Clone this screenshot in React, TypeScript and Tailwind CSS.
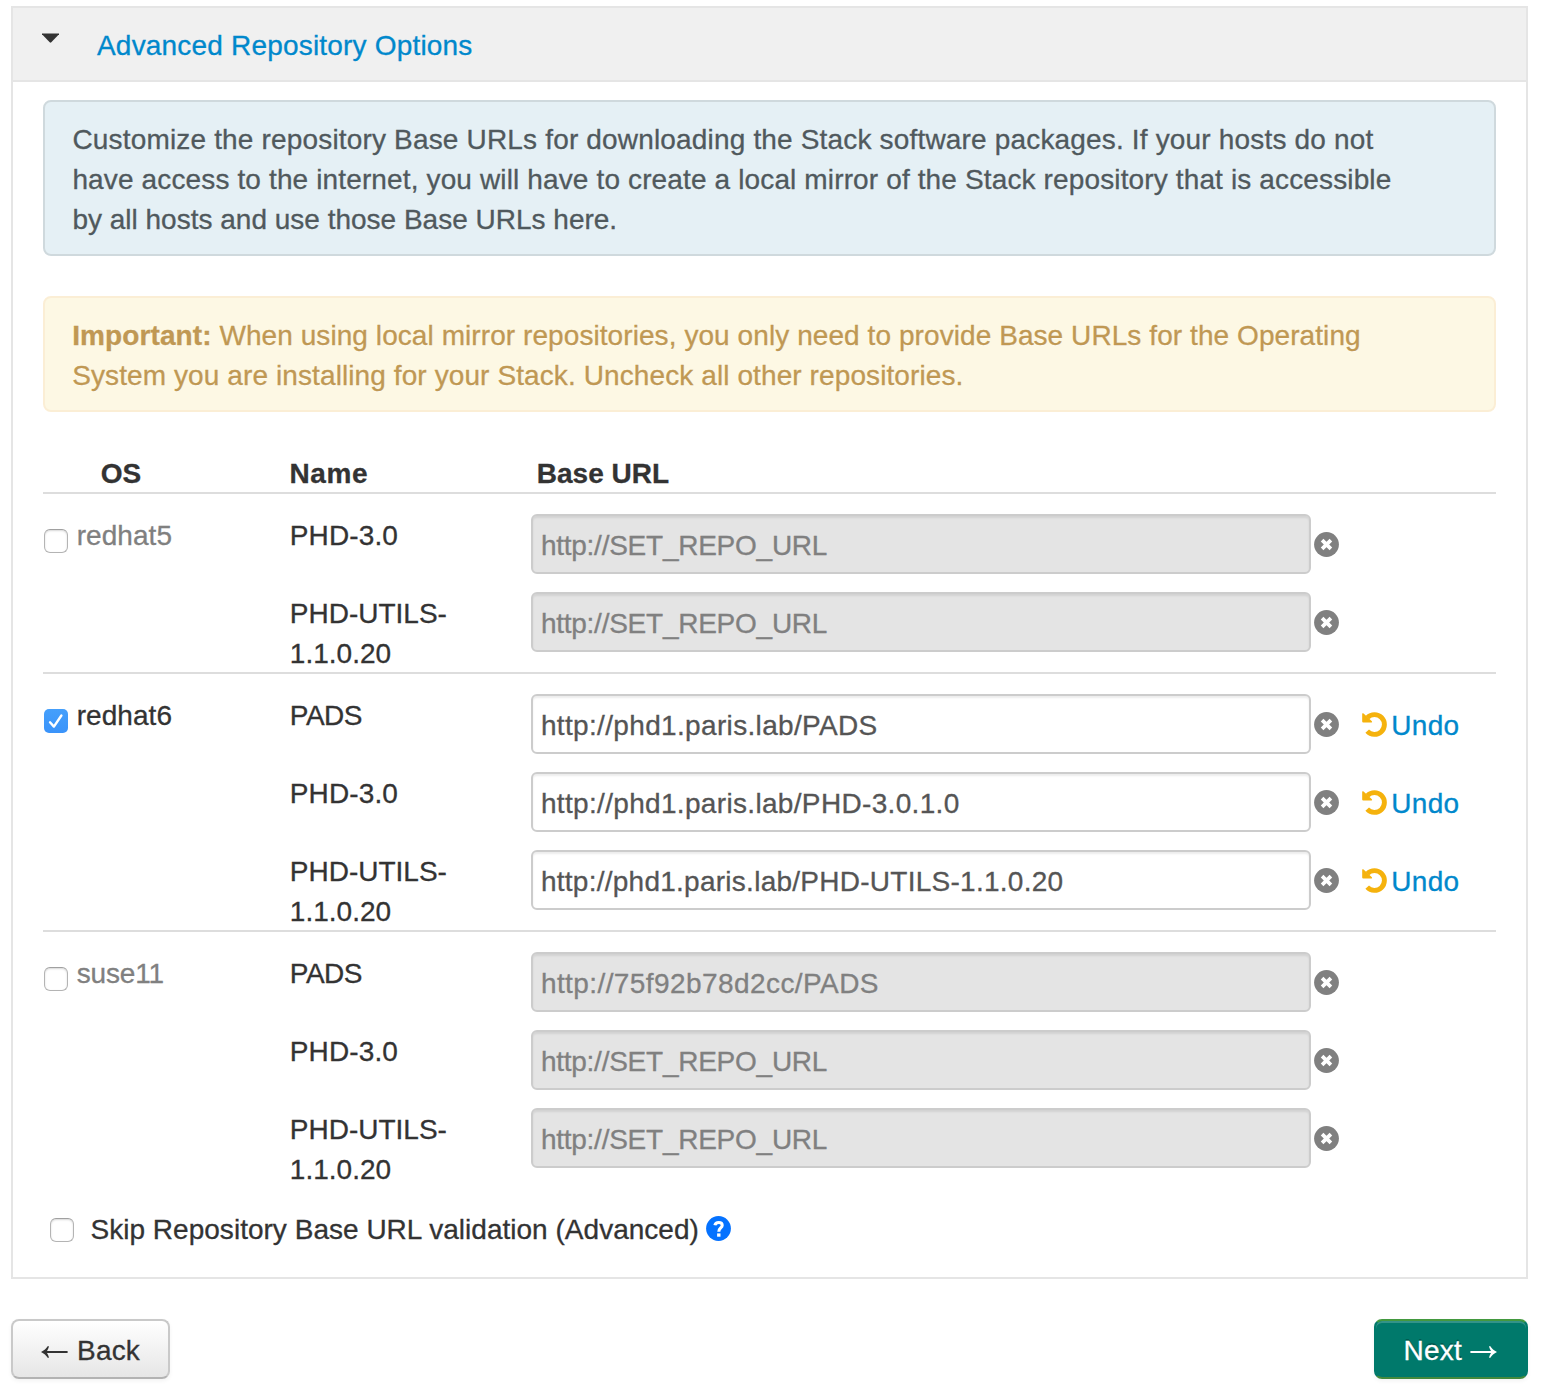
import React, { useState } from 'react';

type Repo = { name: { text: string; tracking: string }[]; url: string; tracking: string };
type OsGroup = { os: string; tracking: string; checked: boolean; repos: Repo[] };

const PADS = [{ text: 'PADS', tracking: 'tracking-[-0.5px]' }];
const PHD = [{ text: 'PHD-3.0', tracking: 'tracking-[0.12px]' }];
const UTILS = [
  { text: 'PHD-UTILS-', tracking: 'tracking-[0px]' },
  { text: '1.1.0.20', tracking: 'tracking-[0.02px]' },
];
const UNSET = { url: 'http://SET_REPO_URL', tracking: 'tracking-[-0.25px]' };

const GROUPS: OsGroup[] = [
  {
    os: 'redhat5',
    tracking: 'tracking-[0.05px]',
    checked: false,
    repos: [
      { name: PHD, ...UNSET },
      { name: UTILS, ...UNSET },
    ],
  },
  {
    os: 'redhat6',
    tracking: 'tracking-[0.05px]',
    checked: true,
    repos: [
      { name: PADS, url: 'http://phd1.paris.lab/PADS', tracking: 'tracking-[0.34px]' },
      { name: PHD, url: 'http://phd1.paris.lab/PHD-3.0.1.0', tracking: 'tracking-[0.33px]' },
      { name: UTILS, url: 'http://phd1.paris.lab/PHD-UTILS-1.1.0.20', tracking: 'tracking-[0.26px]' },
    ],
  },
  {
    os: 'suse11',
    tracking: 'tracking-[-0.15px]',
    checked: false,
    repos: [
      { name: PADS, url: 'http://75f92b78d2cc/PADS', tracking: 'tracking-[0.42px]' },
      { name: PHD, ...UNSET },
      { name: UTILS, ...UNSET },
    ],
  },
];

function RemoveIcon() {
  return (
    <svg viewBox="0 0 25 25" className="block size-[25px] shrink-0">
      <circle cx="12.5" cy="12.5" r="12.4" fill="#808080" />
      <path d="M8.1 8.1 L16.9 16.9 M16.9 8.1 L8.1 16.9" stroke="white" strokeWidth="3.7" />
    </svg>
  );
}

function UndoIcon() {
  return (
    <svg viewBox="0 0 25 25" className="block size-[25px] shrink-0">
      <path d="M5.4 5.6 A9.9 9.9 0 1 1 5.2 19.2" fill="none" stroke="#f5b20d" strokeWidth="4.9" />
      <path d="M0.2 1.6 Q0.8 0.8 1.6 1.5 L9.9 9.3 Q10.6 10.4 9.3 10.6 H1.2 Q0.2 10.6 0.2 9.6 Z" fill="#f5b20d" />
    </svg>
  );
}

function HelpIcon() {
  return (
    <svg viewBox="0 0 25 25" className="block size-[25px] shrink-0">
      <circle cx="12.5" cy="12.5" r="12.4" fill="#0572ff" />
      <path d="M8.9 9.3 C9.3 7.4 10.7 6.5 12.7 6.5 C15 6.5 16.2 7.7 16.2 9.3 C16.2 11.9 12.8 12.2 12.8 15.7" fill="none" stroke="white" strokeWidth="3.1" />
      <rect x="11.1" y="17.4" width="3.4" height="3.3" fill="white" />
    </svg>
  );
}

function Arrow({ className }: { className: string }) {
  return (
    <svg viewBox="0 0 27 12" className={className} fill="currentColor">
      <path d="M0 6 C3 4.5 5.2 2.6 6.9 0 L8 0.5 C7.4 2.3 6.8 3.8 6 5 H26.6 V7 H6 C6.8 8.2 7.4 9.7 8 11.5 L6.9 12 C5.2 9.4 3 7.5 0 6 Z" />
    </svg>
  );
}

function Checkbox({ checked, onChange, label }: { checked: boolean; onChange: () => void; label: string }) {
  return (
    <button
      type="button"
      role="checkbox"
      aria-checked={checked}
      aria-label={label}
      onClick={onChange}
      className={
        checked
          ? 'block size-6 shrink-0 rounded-[5px] bg-linear-to-b from-[#459ffb] to-[#3a93fa]'
          : 'block size-6 shrink-0 rounded-[6px] border border-[#b4b4b4] border-t-[#a0a0a0] bg-white shadow-[inset_0_1px_2px_rgba(0,0,0,0.16)]'
      }
    >
      {checked && (
        <svg viewBox="0 0 24 24" className="block size-6" fill="none" stroke="white" strokeWidth="2.4" strokeLinecap="round" strokeLinejoin="round">
          <path d="M6 13.3 L9.9 17.6 L17.4 6.5" />
        </svg>
      )}
    </button>
  );
}

function RepoRow({ repo, enabled }: { repo: Repo; enabled: boolean }) {
  return (
    <div className="flex h-[78px] items-start last:h-20">
      <div className="w-[242px] shrink-0 pt-0.5 pl-[0.8px]">
        {repo.name.map((part) => (
          <div key={part.text} className={`whitespace-nowrap ${part.tracking}`}>
            {part.text}
          </div>
        ))}
      </div>
      <div
        className={`h-[60px] w-[780px] shrink-0 rounded-[6px] border-2 border-[#ccc] pt-2.5 pl-[7.9px] shadow-[inset_0_2px_2px_rgba(0,0,0,0.075)] ${repo.tracking} ${
          enabled ? 'bg-white text-[#555]' : 'bg-[#e4e4e4] text-[#808080]'
        }`}
      >
        {repo.url}
      </div>
      <div className="flex h-[60px] items-center pl-[3px]">
        <RemoveIcon />
        {enabled && (
          <a className="ml-[23px] flex items-center text-[#0088cc]">
            <UndoIcon />
            <span className="pt-[3px] pl-[4.3px] tracking-[0.3px]">Undo</span>
          </a>
        )}
      </div>
    </div>
  );
}

export default function App() {
  const [selected, setSelected] = useState(GROUPS.map((g) => g.checked));
  const [skip, setSkip] = useState(false);

  return (
    <div className="min-h-[1396px] bg-white pt-1.5 pr-4 pl-[11px] font-['Liberation_Sans',Arial,sans-serif] text-[28px] leading-10 text-[#333] [-webkit-text-stroke:0.3px]">
      <div className="h-[1273px] border-2 border-[#e5e5e5]">
        <div className="flex h-[74px] items-start border-b-2 border-[#e5e5e5] bg-[#f0f0f0] pl-[29px]">
          <svg viewBox="0 0 17 10" className="mt-[25px] h-2.5 w-[17px] fill-[#333]">
            <path d="M0 0.4 H17 V1.3 L9.3 9.3 Q8.5 10 7.7 9.3 L0 1.3 Z" />
          </svg>
          <span className="mt-[18px] ml-[38px] tracking-[0.19px] text-[#0088cc]">Advanced Repository Options</span>
        </div>

        <div className="pt-[18px] pr-[30px] pl-[30px]">
          <div className="h-[156px] rounded-lg border-2 border-[#cfd9dd] bg-[#e5f0f5] pt-[18px] pl-[27.4px] whitespace-nowrap text-[#50595d]">
            <div className="tracking-[0.17px]">
              Customize the repository Base URLs for downloading the Stack software packages. If your hosts do not
            </div>
            <div className="tracking-[0.135px]">
              have access to the internet, you will have to create a local mirror of the Stack repository that is accessible
            </div>
            <div>by all hosts and use those Base URLs here.</div>
          </div>

          <div className="mt-10 h-[116px] rounded-lg border-2 border-[#fbeed5] bg-[#fdf8e4] pt-[18px] pl-[27.2px] whitespace-nowrap text-[#c09853] [text-shadow:0_1px_0_rgba(255,255,255,0.5)]">
            <div className="flex">
              <b className="w-[147.2px] tracking-[0.1px]">Important:</b>
              <span className="tracking-[0.075px]">
                When using local mirror repositories, you only need to provide Base URLs for the Operating
              </span>
            </div>
            <div className="tracking-[0.1px]">
              System you are installing for your Stack. Uncheck all other repositories.
            </div>
          </div>

          <div className="mt-10 flex h-[42px] border-b-2 border-[#ddd] pt-0.5 font-bold">
            <span className="w-[246.5px] pl-[57.7px]">OS</span>
            <span className="w-[247.3px] tracking-[0.6px]">Name</span>
            <span>Base URL</span>
          </div>

          {GROUPS.map((group, i) => (
            <div key={group.os} className="flex border-b-2 border-[#ddd] pt-5 last-of-type:border-b-0">
              <div className="flex w-[246px] shrink-0 items-start pl-px">
                <div className="pt-[15px]">
                  <Checkbox
                    label={group.os}
                    checked={selected[i]}
                    onChange={() => setSelected(selected.map((v, j) => (j === i ? !v : v)))}
                  />
                </div>
                <span className={`pt-0.5 pl-[8.7px] ${group.tracking} ${selected[i] ? '' : 'text-[#808080]'}`}>{group.os}</span>
              </div>
              <div>
                {group.repos.map((repo, j) => (
                  <RepoRow key={j} repo={repo} enabled={selected[i]} />
                ))}
              </div>
            </div>
          ))}

          <section className="mt-5 flex h-10 items-start pl-[7px]">
            <div className="pt-2.5">
              <Checkbox label="Skip validation" checked={skip} onChange={() => setSkip(!skip)} />
            </div>
            <span className="w-[632px] pt-0.5 pl-[16.5px] tracking-[0.02px] whitespace-nowrap">Skip Repository Base URL validation (Advanced)</span>
            <div className="pt-2">
              <HelpIcon />
            </div>
          </section>
        </div>
      </div>

      <div className="mt-10 flex h-[60px] justify-between">
        <button className="flex w-[159px] items-start rounded-lg border-2 border-[#c9c9c9] border-b-[#b3b3b3] bg-linear-to-b from-white to-[#e6e6e6] pt-2.5 pl-[28px] shadow-[0_2px_4px_rgba(0,0,0,0.05)]">
          <Arrow className="mt-[15px] h-3 w-[27px]" />
          <span className="ml-[9px] tracking-[0.2px]">Back</span>
        </button>
        <button className="flex w-[154px] items-start rounded-lg border-2 border-[#00796b] border-t-[#43993f] border-b-[#43893c] bg-[#00796b] pt-2.5 pl-[27.5px] text-white shadow-[inset_0_2px_0_rgba(255,255,255,0.2),0_2px_4px_rgba(0,0,0,0.05)] [text-shadow:0_-2px_0_rgba(0,0,0,0.25)]">
          <span className="w-[66.5px] text-left tracking-[0.2px]">Next</span>
          <Arrow className="mt-[15px] h-3 w-[27px] rotate-180" />
        </button>
      </div>
    </div>
  );
}
